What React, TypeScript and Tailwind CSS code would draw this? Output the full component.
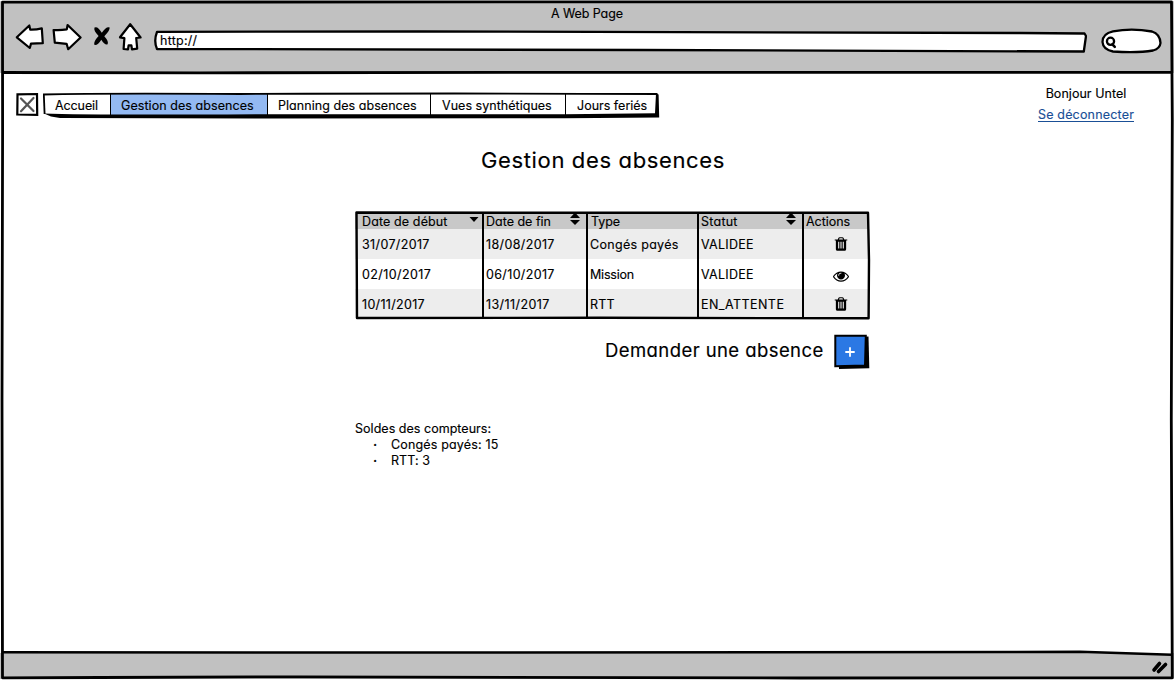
import type { ReactNode } from "react";

const TRASH =
  "M704 1376v-704q0-14-9-23t-23-9h-64q-14 0-23 9t-9 23v704q0 14 9 23t23 9h64q14 0 23-9t9-23zm256 0v-704q0-14-9-23t-23-9h-64q-14 0-23 9t-9 23v704q0 14 9 23t23 9h64q14 0 23-9t9-23zm256 0v-704q0-14-9-23t-23-9h-64q-14 0-23 9t-9 23v704q0 14 9 23t23 9h64q14 0 23-9t9-23zm-544-992h448l-48-117q-7-9-17-11h-317q-10 2-17 11zm928 32v64q0 14-9 23t-23 9h-96v948q0 83-47 143.5t-113 60.5h-832q-66 0-113-58.5t-47-141.5v-952h-96q-14 0-23-9t-9-23v-64q0-14 9-23t23-9h309l70-167q15-37 54-63t79-26h320q40 0 79 26t54 63l70 167h309q14 0 23 9t9 23z";
const EYE =
  "M1664 960q-152-236-381-353 61 104 61 225 0 185-131.5 316.5t-316.5 131.5-316.5-131.5-131.5-316.5q0-121 61-225-229 117-381 353 133 205 333.5 326.5t434.5 121.5 434.5-121.5 333.5-326.5zm-720-384q0-20-14-34t-34-14q-125 0-214.5 89.5t-89.5 214.5q0 20 14 34t34 14 34-14 14-34q0-86 61-147t147-61q20 0 34-14t14-34zm848 384q0 34-20 69-140 230-376.5 368.5t-499.5 138.5-499.5-139-376.5-368q-20-35-20-69t20-69q140-229 376.5-368t499.5-139 499.5 139 376.5 368q20 35 20 69z";

function Glyph({ d }: { d: string }) {
  return (
    <svg viewBox="0 0 1792 1792" className="size-4 fill-black">
      <path d={d} />
    </svg>
  );
}

/* Browser chrome: arrows, stop, home, address and search fields */
function Toolbar() {
  return (
    <div className="flex h-8">
      <svg viewBox="14 21 134 32" className="ml-3.5 h-8 w-[134px] fill-white stroke-black" strokeWidth="2.2" strokeLinejoin="round" strokeLinecap="round">
        <path d="M16.8 37.3 29.3 25.5 30.2 29.6Q36 29.8 41.8 28.4L42.8 43.2 31 43.6 29.8 48Z" />
        <path d="M53.6 30Q60 30.6 66.8 29.4L67.6 25 80.6 37.5 68.2 49.2 66.6 43.8 54.8 42.6Z" />
        <path d="M94.500 27.500Q97.800 25.800 101.800 32.800 106 26.200 109.500 27.300 110.500 30 104.300 36.300 109 41.500 107.600 44.300 104.800 45.500 101.300 39.700 97.500 45.800 94.300 44.800 93.300 41.700 98.600 36 93.300 30.500 94.500 27.500Z" fill="#000" stroke="none" />
        <path d="M130.2 24.2 120 37.300 124.400 38.200 123.600 49 128 49.400 128.600 45.400 131.400 45.400 132 49.400 137.200 48.600 136.200 38 140.600 37.500Z" />
      </svg>
      <div className="relative ml-[5px] h-8 w-[934px]">
        <svg viewBox="153 21 934 32" className="absolute inset-0 h-8 w-[934px] fill-white stroke-black" strokeLinejoin="round">
          <path d="M157 31.800 420 31.500 1020 33 1084.500 33.500 1086 36 1083.800 51.500 640 50 157 49Q153.500 41 157 31.800Z" strokeWidth="2.300" />
        </svg>
        <span className="relative block pt-3 pl-[7px] text-[12.5px] leading-4 tracking-[0.25px]">http://</span>
      </div>
      <svg viewBox="1100 21 64 36" className="ml-[13px] h-9 w-16 fill-white stroke-black" strokeWidth="2.300" strokeLinejoin="round" strokeLinecap="round">
        <path d="M1102.500 42Q1102.500 33.500 1113 31.300 1132 28 1152 31.500 1160 34 1160.500 43 1160 48.500 1153 50.500 1138 53 1113 51.500 1103 49.500 1102.500 42Z" />
        <circle cx="1110.500" cy="41.300" r="3.600" />
        <path d="m1112.500 44.500 2.300 2.300" strokeWidth="2.500" />
      </svg>
    </div>
  );
}

const items = [
  { label: "Accueil", cls: "w-[67px] pl-[12px] tracking-[-0.1px]" },
  { label: "Gestion des absences", cls: "w-[157px] pl-[10px] tracking-[0.07px] bg-[#93b9f2] border-l" },
  { label: "Planning des absences", cls: "w-[163px] pl-[10px] tracking-[0.05px] border-l" },
  { label: "Vues synthétiques", cls: "w-[135px] pl-[11px] tracking-[0.03px] border-l" },
  { label: "Jours feriés", cls: "w-[92px] pl-[11px] border-l" },
];

function Menu() {
  return (
    <div className="flex items-start">
      <svg viewBox="16 92 24 26" className="h-[26px] w-6">
        <path d="M17.500 94.300 37 94 37.200 114.800 17.300 114.500Z" fill="#fff" stroke="#000" strokeWidth="2.200" />
        <path d="m21 98.500 12.500 12.500M33.500 98 21 111.300" stroke="#555" strokeWidth="2.200" strokeLinecap="round" />
      </svg>
      <nav className="relative ml-[3px] flex pt-0.5">
        {items.map((i) => (
          <a key={i.label} className={"block h-[21px] border-black pt-1 text-[12.5px] leading-4 whitespace-nowrap " + i.cls}>
            {i.label}
          </a>
        ))}
        <svg viewBox="43 92 617 28" className="absolute top-0 left-0 h-7 w-[617px]">
          <path d="M43 94.500Q100 93.200 240 94 460 93 657.500 94" fill="none" stroke="#000" strokeWidth="1.800" />
          <path d="M43.800 94 44.600 114" stroke="#000" strokeWidth="1.800" />
          <path d="M44 113.500Q90 115.200 267 114.200L565 114.300 655 113.300 656 93.500 658.600 94.500 659.200 117.500 565 118.200 267 118.500 60 118 51 116.500Z" />
        </svg>
      </nav>
    </div>
  );
}

function Sort({ both }: { both?: boolean }) {
  return (
    <svg viewBox="0 0 12 14" className="-mt-0.5 h-3.5 w-3 fill-black">
      {both && <path d="M1 6 6 .5 11 6Z" />}
      {both ? <path d="M1 8 11 8 6 13Z" /> : <path d="M1.500 5 10.500 5 6 10Z" />}
    </svg>
  );
}

function Th({ children, cls, sort }: { children: ReactNode; cls: string; sort?: ReactNode }) {
  return (
    <div className={"flex h-[17px] justify-between border-black bg-[#c8c8c8] pt-0.5 leading-4 " + cls}>
      <span>{children}</span>
      {sort}
    </div>
  );
}

const rows = [
  {
    bg: "bg-[#ededed] h-[30px]",
    a: ["31/07/2017", "tracking-[0.36px]"],
    b: ["18/08/2017", "tracking-[0.37px]"],
    c: ["Congés payés", "tracking-[0.3px]"],
    d: ["VALIDEE", "tracking-[0.28px]"],
    icon: TRASH,
    pos: "pt-[7px]",
  },
  {
    bg: "bg-white h-[30px]",
    a: ["02/10/2017", "tracking-[0.4px]"],
    b: ["06/10/2017", "tracking-[0.35px]"],
    c: ["Mission", "tracking-[-0.2px]"],
    d: ["VALIDEE", "tracking-[0.28px]"],
    icon: EYE,
    pos: "pt-[9px]",
  },
  {
    bg: "bg-[#ededed] h-[29px]",
    a: ["10/11/2017", "tracking-[0.32px]"],
    b: ["13/11/2017", "tracking-[0.4px]"],
    c: ["RTT", "tracking-[0.25px]"],
    d: ["EN_ATTENTE", "tracking-[0.45px]"],
    icon: TRASH,
    pos: "pt-[7px]",
  },
];

function Absences() {
  return (
    <div className="relative ml-[355px] w-[515px] text-[12.5px]">
      <div className="grid grid-cols-[127px_104px_111px_105px_67px]">
        <Th cls="pl-[7px] pr-[2px] tracking-[0.12px]" sort={<Sort />}>Date de début</Th>
        <Th cls="border-l-2 pl-[2px] pr-[5px]" sort={<Sort both />}>Date de fin</Th>
        <Th cls="border-l-2 pl-[3px] tracking-[-0.05px]">Type</Th>
        <Th cls="border-l-2 pl-[2px] pr-[5px] tracking-[0.25px]" sort={<Sort both />}>Statut</Th>
        <Th cls="border-l-2 pl-[2px] tracking-[-0.05px]">Actions</Th>
      </div>
      {rows.map((r, i) => (
        <div key={i} className={"grid grid-cols-[127px_104px_111px_105px_67px] leading-4 " + r.bg}>
          <div className={"pt-2 pl-[7px] " + r.a[1]}>{r.a[0]}</div>
          <div className={"border-l-2 border-black pt-2 pl-[2px] " + r.b[1]}>{r.b[0]}</div>
          <div className={"border-l-2 border-black pt-2 pl-[2px] " + r.c[1]}>{r.c[0]}</div>
          <div className={"border-l-2 border-black pt-2 pl-[2px] " + r.d[1]}>{r.d[0]}</div>
          <div className={"border-l-2 border-black pl-[29px] " + r.pos}>
            <Glyph d={r.icon} />
          </div>
        </div>
      ))}
      <svg viewBox="355 210 516 111" className="absolute -top-[2px] left-0 h-[111px] w-[516px]" fill="none" stroke="#000" strokeLinejoin="round">
        <path d="M356.500 212.500 600 212.800 868 212.800 869 260 868.600 318.300 600 317.800 357 318Z" strokeWidth="2.400" />
      </svg>
    </div>
  );
}

export default function App() {
  return (
    <div className="relative flex h-[680px] w-[1174px] flex-col overflow-hidden bg-white font-['Inter',sans-serif] font-normal text-black [font-feature-settings:'cv11'] [-webkit-text-stroke:0.15px]">
      <header className="h-[73px] shrink-0 bg-[#c1c1c1] pt-1.5">
        <div className="h-[15px] text-center text-[12.5px] leading-4 tracking-[-0.08px]">A Web Page</div>
        <Toolbar />
      </header>

      <main className="grow">
        <div className="flex justify-between pt-[19px] pr-10 pl-4">
          <Menu />
          <div className="flex w-[96px] flex-col items-center text-[12.5px] leading-4 whitespace-nowrap">
            <span className="-mt-[6px] tracking-[0.04px]">Bonjour Untel</span>
            <a className="mt-[5px] h-[15px] border-b border-[#1a4f96] tracking-[0.18px] text-[#1a4f96]">Se déconnecter</a>
          </div>
        </div>

        <h1 className="mt-[24px] pl-[481px] text-[22px] leading-7 tracking-[0.64px]">Gestion des absences</h1>

        <div className="mt-[38px]">
          <Absences />
        </div>

        <div className="mt-[15px] flex items-start pl-[605px]">
          <span className="w-[228px] pt-[5px] text-[18.5px] leading-6 tracking-[0.42px] whitespace-nowrap">Demander une absence</span>
          <svg viewBox="833 333 37 37" className="size-[37px]">
            <path d="M838 338 868.500 336.500 869.300 368.200 839 369Z" />
            <path d="M835.300 335.800 865.800 335.800 865 365.500 835.300 366.300Z" fill="#2b78e4" stroke="#000" strokeWidth="2" />
            <path d="M850 347.300v9.400M845.300 352h9.400" stroke="#fff" strokeWidth="1.800" />
          </svg>
        </div>

        <section className="mt-[51px] pl-[355px] text-[12.5px] leading-4">
          <p className="tracking-[0.03px]">Soldes des compteurs:</p>
          <ul>
            <li className="flex pl-[18px]">
              <span className="w-[18px] font-bold">·</span>
              <span className="tracking-[0.16px]">Congés payés: 15</span>
            </li>
            <li className="flex pl-[18px]">
              <span className="w-[18px] font-bold">·</span>
              <span className="tracking-[0.05px]">RTT: 3</span>
            </li>
          </ul>
        </section>
      </main>

      <footer className="h-[27px] shrink-0 bg-[#c1c1c1]" />

      {/* Hand-drawn window outline and resize grip */}
      <svg viewBox="0 0 1174 680" className="pointer-events-none absolute inset-0 h-[680px] w-[1174px]" fill="none" stroke="#000" strokeWidth="2.800" strokeLinejoin="round">
        <path d="M1080 651.500 1172 655 1172 650 1080 650Z" fill="#fff" stroke="none" />
        <path d="M0 0H1174V1.200H0ZM0 679H1174V680H0Z" fill="#fff" stroke="none" />
        <path d="M2.500 2.200 500 1.800 1171.500 2 1172.300 120 1171.300 420 1172.300 677.800 800 678 300 676.800 100 677.500 2.500 677.800 2 400 2.600 130Z" />
        <path d="M2 72.500 200 72.800 620 72.300 1171 72.300" />
        <path d="M2 652.300 500 652.600 1080 651.800 1172 654.800" strokeWidth="2.500" />
        <path d="m1154 670 5.500-6.500M1158.500 671.500 1165.500 664.500" strokeWidth="3.600" strokeLinecap="round" />
      </svg>
    </div>
  );
}
